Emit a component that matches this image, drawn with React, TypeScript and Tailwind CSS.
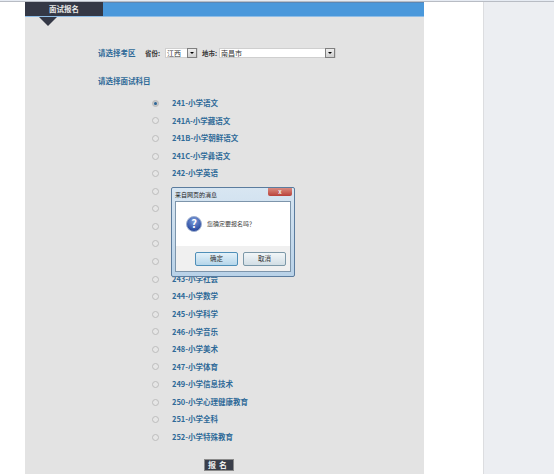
const subjects = [
  "241-小学语文",
  "241A-小学藏语文",
  "241B-小学朝鲜语文",
  "241C-小学彝语文",
  "242-小学英语",
  "",
  "",
  "",
  "",
  "",
  "243-小学社会",
  "244-小学数学",
  "245-小学科学",
  "246-小学音乐",
  "248-小学美术",
  "247-小学体育",
  "249-小学信息技术",
  "250-小学心理健康教育",
  "251-小学全科",
  "252-小学特殊教育",
]

const font = { fontFamily: '"Noto Sans CJK SC", "Liberation Sans", sans-serif' }

function FakeSelect({ value, className }: { value: string; className: string }) {
  return (
    <div className={`flex h-[10px] items-center justify-between border border-[#cfcfcf] bg-white pl-[1px] ${className}`}>
      <span className="text-[7px] leading-none text-[#333]">{value}</span>
      <span className="flex h-[10px] w-[10px] items-center justify-center border border-[#808080] bg-gradient-to-b from-[#eeeeee] to-[#d0d0d0]">
        <span className="h-0 w-0 border-x-[2px] border-t-[2px] border-x-transparent border-t-black" />
      </span>
    </div>
  )
}

function Radio({ checked }: { checked?: boolean }) {
  return (
    <span className={`flex h-[7px] w-[7px] items-center justify-center rounded-full border border-[#bcbcbc] ${checked ? "bg-[#c8c8c8]" : "bg-[#e6e6e6]"}`}>
      {checked && <span className="h-[3px] w-[3px] rounded-full bg-[#2a6496]" />}
    </span>
  )
}

function Dialog() {
  return (
    <div className="absolute left-[171px] top-[187px] flex h-[90px] w-[124px] flex-col rounded-[2px] border border-[#5b7c9e] bg-gradient-to-b from-[#d8e6f2] to-[#b9d2e8] px-[3px] pb-[4px]">
      <div className="relative flex h-[13px] items-center">
        <span className="text-[6px] leading-none text-[#222]">来自网页的消息</span>
        <span className="absolute right-[-1px] top-0 flex h-[8px] w-[24px] items-center justify-center rounded-b-[2px] bg-gradient-to-b from-[#d98a80] to-[#b8403a] text-[6px] font-bold leading-none text-[#eee]">
          x
        </span>
      </div>
      <div className="flex flex-1 flex-col border border-[#7d95ab] bg-white">
        <div className="flex flex-1 items-center gap-[5px] pl-[10px]">
          <svg width="16" height="16" viewBox="0 0 16 16">
            <defs>
              <radialGradient id="q" cx="50%" cy="30%" r="70%">
                <stop offset="0%" stopColor="#7f9fdc" />
                <stop offset="100%" stopColor="#1f3f98" />
              </radialGradient>
            </defs>
            <circle cx="8" cy="8" r="7.5" fill="url(#q)" stroke="#9fb0cf" />
            <text x="8" y="12" textAnchor="middle" fontSize="11" fontWeight="700" fill="#fff" style={font}>
              ?
            </text>
          </svg>
          <span className="text-[6px] leading-none text-[#444]">您确定要报名吗？</span>
        </div>
        <div className="flex h-[25px] items-center justify-end gap-[5px] bg-[#f0f0f0] pr-[4px]">
          <button className="h-[14px] w-[43px] rounded-[2px] border border-[#4f8fb8] bg-gradient-to-b from-[#e4f1f9] to-[#b5d6ea] text-[6.5px] leading-none text-[#333]">
            确定
          </button>
          <button className="h-[14px] w-[43px] rounded-[2px] border border-[#7c98a8] bg-gradient-to-b from-[#f2f6f8] to-[#d2dee5] text-[6.5px] leading-none text-[#333]">
            取消
          </button>
        </div>
      </div>
    </div>
  )
}

export default function App() {
  return (
    <div className="relative h-[474px] w-[554px] overflow-hidden bg-white" style={font}>
      <div className="h-[2px] border-b border-[#b8bcc4] bg-[#e6ebf3]" />
      <div className="flex h-[472px]">
        <div className="ml-[25px] flex h-full w-[399px] flex-col bg-[#e3e3e3]">
          <div className="flex h-[15px] border-b border-[#8fbde6] border-t border-t-[#5a87b5] bg-[#4a98db]">
            <div className="relative flex w-[78px] justify-center bg-[#343846] -mt-[1px]">
              <span className="mt-[2px] text-[7.5px] font-bold leading-[10px] text-[#e8e8e8]">面试报名</span>
              <span className="absolute left-[14px] top-[15px] h-0 w-0 border-x-[9px] border-t-[9px] border-x-transparent border-t-[#343846]" />
            </div>
          </div>
          <div className="mt-[31px] ml-[73px] flex items-center">
            <span className="w-[47px] text-[7.5px] font-bold leading-[10px] text-[#2f6a98]">请选择考区</span>
            <span className="w-[20px] text-[6.5px] font-bold leading-[10px] text-[#333]">省份:</span>
            <FakeSelect value="江西" className="w-[33px]" />
            <span className="ml-[4px] w-[17px] text-[6.5px] font-bold leading-[10px] text-[#333]">地市:</span>
            <FakeSelect value="南昌市" className="w-[117px]" />
          </div>
          <div className="mt-[18px] ml-[73px] text-[7.5px] font-bold leading-[10px] text-[#2f6a98]">请选择面试科目</div>
          <div className="mt-[8.5px] ml-[127px] flex flex-col">
            {subjects.map((s, i) => (
              <div key={i} className="flex h-[17.58px] items-center">
                <Radio checked={i === 0} />
                {s && <span className="mb-[1px] ml-[13px] text-[7.5px] font-bold leading-none text-[#2f6a98]">{s}</span>}
              </div>
            ))}
          </div>
          <div className="mt-[13px] ml-[179px] flex h-[12px] w-[30px] items-center justify-center border border-[#8a8a8a] bg-[#3a3e4a] text-[8px] font-bold leading-none tracking-[3px] text-[#eee]">
            报名
          </div>
        </div>
        <div className="ml-[59px] h-full flex-1 border-l border-[#dcdde0] bg-[#eceef2]" />
      </div>
      <Dialog />
    </div>
  )
}
